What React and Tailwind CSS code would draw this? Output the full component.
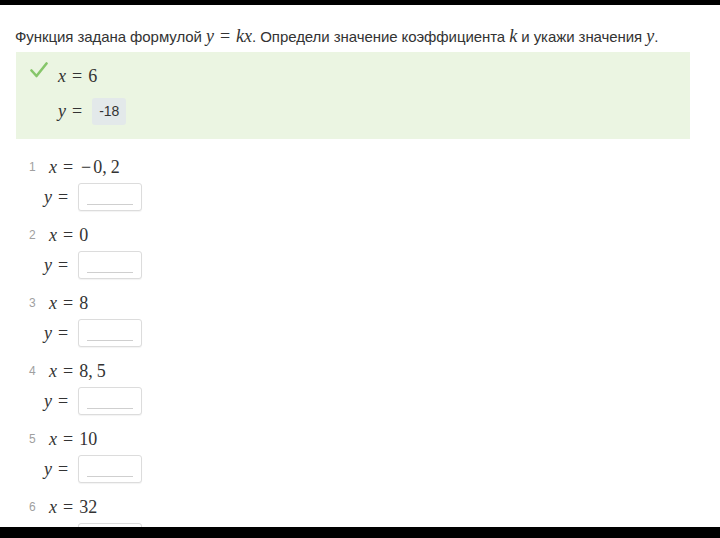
import React from "react";

function V({ children }) {
  return <span className="italic">{children}</span>;
}

function Eq({ name, value }) {
  return (
    <span className="font-['Liberation_Serif',serif] text-[18px] text-[#333]">
      <V>{name}</V>
      <span className="mx-[6px]">=</span>
      {value}
    </span>
  );
}

// digits with KaTeX-like spacing: wide minus, thin space after comma
function Num({ v }) {
  const parts = v.split(",");
  return (
    <>
      {parts.map((p, i) => (
        <React.Fragment key={i}>
          {p.startsWith("−") ? (
            <>
              <span className="inline-block w-[14px] text-center">−</span>
              {p.slice(1)}
            </>
          ) : (
            p
          )}
          {i < parts.length - 1 && <span className="mr-[4px]">,</span>}
        </React.Fragment>
      ))}
    </>
  );
}

function EmptyInput() {
  return (
    <div className="w-[64px] h-[28px] border border-[#dcdcdc] rounded-[3px] bg-white shadow-[0_1px_1px_rgba(0,0,0,0.05)] flex items-end justify-center pb-[5px]">
      <div className="w-[46px] h-px bg-[#cfcfcf]" />
    </div>
  );
}

const items = [
  { n: 1, x: "−0,2" },
  { n: 2, x: "0" },
  { n: 3, x: "8" },
  { n: 4, x: "8,5" },
  { n: 5, x: "10" },
  { n: 6, x: "32" },
];

export default function App() {
  return (
    <div className="w-[720px] h-[538px] flex flex-col bg-white overflow-hidden font-['Liberation_Sans',Arial,sans-serif]">
      <div className="h-[5px] bg-black shrink-0" />
      <div className="flex-1 overflow-hidden px-[15px] pt-[20px]">
        <p className="text-[15px] text-[#333] leading-[22px] tracking-[-0.07px] whitespace-nowrap">
          Функция задана формулой{" "}
          <span className="font-['Liberation_Serif',serif] text-[18px] tracking-normal">
            <V>y</V>
            <span className="mx-[6px]">=</span>
            <V>kx</V>
          </span>
          . Определи значение коэффициента{" "}
          <span className="font-['Liberation_Serif',serif] italic text-[18px]">k</span> и укажи значения{" "}
          <span className="font-['Liberation_Serif',serif] italic text-[18px]">y</span>.
        </p>
        <div className="mt-[4px] ml-px w-[674px] h-[87px] bg-[#ebf5e2] pl-[14px] pt-[12px] flex">
          <svg width="18" height="16" viewBox="0 0 18 16" className="-mt-[2px] shrink-0">
            <path d="M1.5 8.5 L6.5 14 L16.5 1.5" fill="none" stroke="#86c66a" strokeWidth="2.6" strokeLinecap="round" strokeLinejoin="round" />
          </svg>
          <div className="ml-[10px] flex flex-col">
            <div className="h-[24px] flex items-center">
              <Eq name="x" value="6" />
            </div>
            <div className="mt-[10px] flex items-center">
              <Eq name="y" value="" />
              <span className="ml-[4px] h-[27px] px-[7px] rounded-[3px] bg-[#e3e9ea] text-[14px] text-[#333] flex items-center">-18</span>
            </div>
          </div>
        </div>
        <div className="mt-[16px] pl-[14px] flex flex-col">
          {items.map((it) => (
            <div key={it.n} className="h-[68px] flex flex-col">
              <div className="h-[24px] flex items-center">
                <span className="w-[20px] text-[12px] text-[#a0a0a0]">{it.n}</span>
                <Eq name="x" value={<Num v={it.x} />} />
              </div>
              <div className="mt-[4px] pl-[15px] flex items-center">
                <Eq name="y" value="" />
                <span className="ml-[4px]"><EmptyInput /></span>
              </div>
            </div>
          ))}
        </div>
      </div>
      <div className="h-[11px] bg-black shrink-0" />
    </div>
  );
}
